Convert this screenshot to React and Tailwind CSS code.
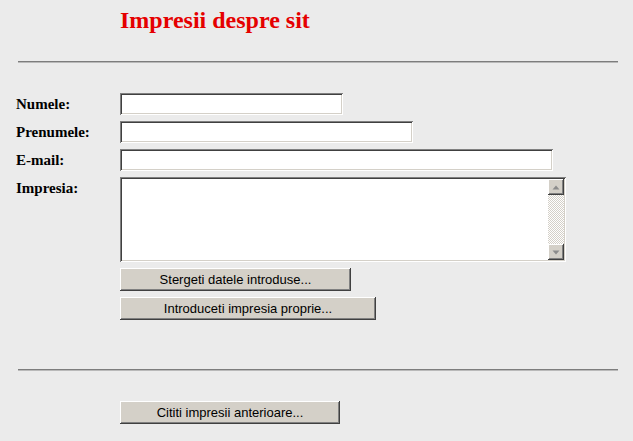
import React from 'react';

const sunken = 'shadow-[inset_1px_1px_#808080,inset_-1px_-1px_#ffffff,inset_2px_2px_#404040,inset_-2px_-2px_#d4d0c8]';
const raised = 'shadow-[inset_-1px_-1px_#404040,inset_1px_1px_#ffffff,inset_-2px_-2px_#808080]';

function Label({ children }) {
  return <div className="w-[120px] shrink-0 pl-[16px] text-[15px] leading-[22px] font-bold text-black">{children}</div>;
}

function Field({ width }) {
  return <input type="text" className={`h-[22px] bg-white px-[3px] outline-none ${sunken}`} style={{ width }} />;
}

function ScrollBtn({ down }) {
  return (
    <div className={`w-[16px] h-[16px] bg-[#d4d0c8] flex items-center justify-center ${raised}`}>
      <svg width="8" height="5" viewBox="0 0 8 5">
        {down
          ? <polygon points="0.5,0.5 7.5,0.5 4,4.5" fill="#8c8c8c" />
          : <polygon points="4,0.5 7.5,4.5 0.5,4.5" fill="#8c8c8c" />}
      </svg>
    </div>
  );
}

function Btn({ width, children }) {
  return (
    <button className={`h-[23px] bg-[#d4d0c8] text-[13px] text-black font-['Liberation_Sans',Arial,sans-serif] ${raised}`} style={{ width }}>
      {children}
    </button>
  );
}

function Rule() {
  return <div className="ml-[18px] w-[600px] h-[2px] border-t border-[#7d7d7d] border-b border-b-[#b9b9b9]" />;
}

export default function App() {
  return (
    <div className="w-[633px] h-[441px] overflow-hidden bg-[#ebebeb] font-['Liberation_Serif','Times_New_Roman',serif]">
      <h1 className="pl-[120px] pt-[6px] text-[24px] leading-[28px] font-bold text-[#e50000]">Impresii despre sit</h1>

      <div className="mt-[27px]"><Rule /></div>

      <div className="mt-[30px] flex flex-col gap-[6px]">
        <div className="flex"><Label>Numele:</Label><Field width={223} /></div>
        <div className="flex"><Label>Prenumele:</Label><Field width={293} /></div>
        <div className="flex"><Label>E-mail:</Label><Field width={433} /></div>
        <div className="flex">
          <Label>Impresia:</Label>
          <div className={`w-[446px] h-[85px] bg-white p-[2px] flex ${sunken}`}>
            <div className="flex-1" />
            <div className="w-[16px] flex flex-col bg-[repeating-conic-gradient(#d4d0c8_0_25%,#ffffff_0_50%)] bg-[length:2px_2px]">
              <ScrollBtn />
              <div className="flex-1" />
              <ScrollBtn down />
            </div>
          </div>
        </div>
      </div>

      <div className="pl-[120px] mt-[6px] flex flex-col items-start gap-[6px]">
        <Btn width={231}>Stergeti datele introduse...</Btn>
        <Btn width={256}>Introduceti impresia proprie...</Btn>
      </div>

      <div className="mt-[49px]"><Rule /></div>

      <div className="pl-[120px] mt-[29px]">
        <Btn width={220}>Cititi impresii anterioare...</Btn>
      </div>
    </div>
  );
}
